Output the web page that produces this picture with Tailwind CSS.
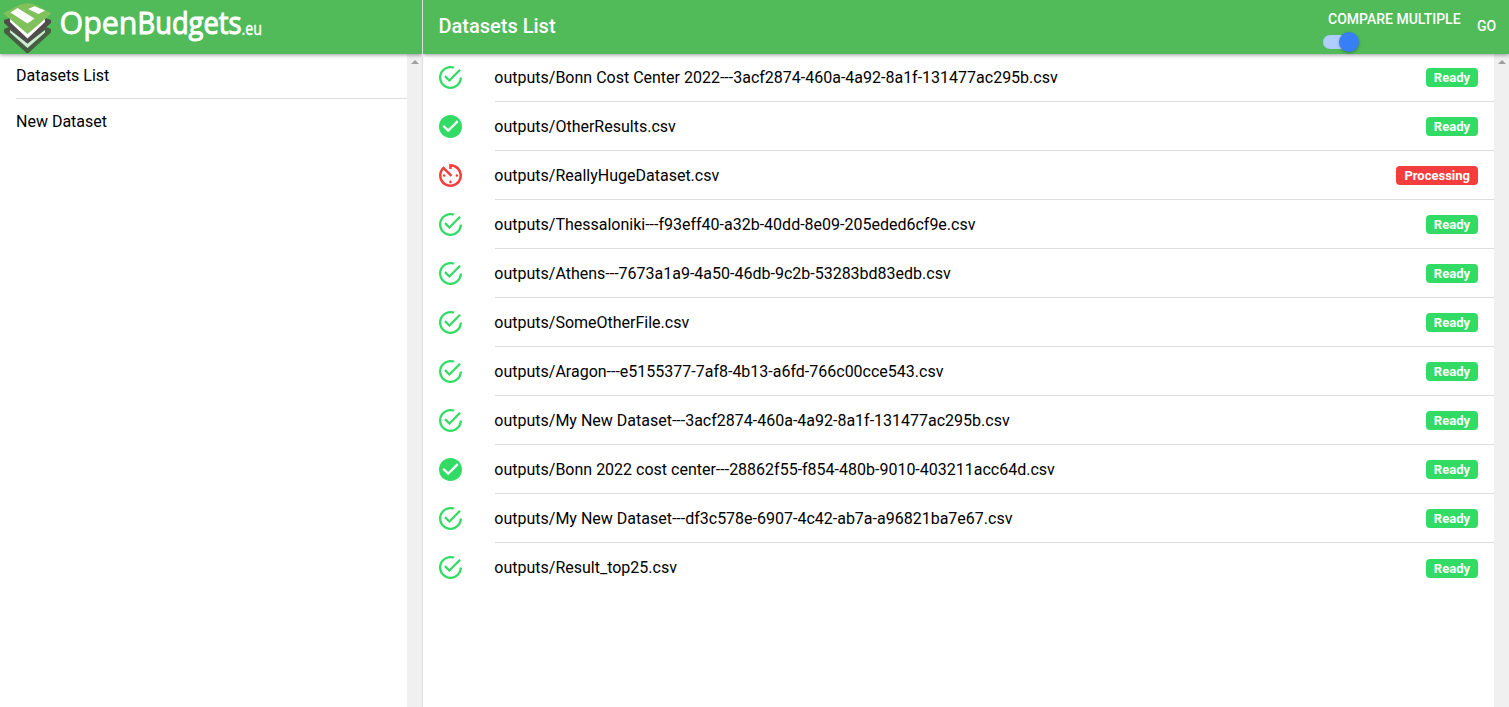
<!DOCTYPE html>
<html lang="en">
<head>
<meta charset="utf-8">
<title>Datasets List</title>
<script src="https://cdn.jsdelivr.net/npm/@tailwindcss/browser@4"></script>
</head>
<body class="flex h-screen overflow-hidden bg-white font-['Roboto',sans-serif] text-base text-black">
<svg class="hidden">
  <symbol id="outline" viewBox="48 48 416 416"><path d="M170.7 216.5 141.6 245.6l93.6 93.6 208-208-29.1-29.1L235.2 280.9zM422.4 256c0 91.5-74.9 166.4-166.4 166.4S89.6 347.5 89.6 256 164.5 89.6 256 89.6c15.600 0 31.200 2.100 45.800 6.200L334 62.400C310.100 53 284.100 48 256 48 141.600 48 48 141.600 48 256s93.600 208 208 208 208-93.600 208-208z"/></symbol>
  <symbol id="filled" viewBox="2 2 20 20"><path d="M12 2C6.480 2 2 6.480 2 12s4.480 10 10 10 10-4.480 10-10S17.520 2 12 2zm-2 15-5-5 1.410-1.410L10 14.170l7.590-7.590L19 8z"/></symbol>
  <symbol id="timer" viewBox="3 3 18 18"><path d="M11 17c0 .55.45 1 1 1s1-.45 1-1-.45-1-1-1-1 .45-1 1zm0-14v4h2V5.080c3.390.49 6 3.390 6 6.920 0 3.870-3.130 7-7 7s-7-3.130-7-7c0-1.680.59-3.220 1.580-4.420L12 13l1.410-1.410-6.800-6.800v.02C4.420 6.450 3 9.050 3 12c0 4.970 4.020 9 9 9 4.970 0 9-4.030 9-9s-4.030-9-9-9h-1zm7 9c0-.55-.45-1-1-1s-1 .45-1 1 .45 1 1 1 1-.45 1-1zM6 12c0 .55.45 1 1 1s1-.45 1-1-.45-1-1-1-1 .45-1 1z"/></symbol>
</svg>
<aside class="flex w-[423px] shrink-0 flex-col border-r border-[#dedede]">
  <header class="z-10 flex h-[54px] shrink-0 bg-[#51ba59] shadow-[0_1px_4px_rgba(0,0,0,0.4)] [clip-path:inset(0_0_-8px_0)]">
    <svg class="h-[54px] w-[280px]" viewBox="0 0 280 54">
      <path d="m4 29 5-2 18.500 14L46 27l5 2v3.500L28.500 53h-2L4 32.500z" fill="#465f42"/>
      <path d="m10 30 17.500 13.500L45 30v2.500L27.500 48 10 32.500z" fill="#cdebd0"/>
      <path d="m4 20 6-2 17.500 15L45 18l6 2v3L27.500 43.500 4 23z" fill="#514c4b"/>
      <path d="m10 18 17.500 14L45 18v4L27.500 38.500 10 22z" fill="#fff"/>
      <path d="M4 13 19 5q9-3.500 17 0l15 8v1L27.500 34 4 14z" fill="#80c15c"/>
      <path d="m10.500 12.500 7-4.500L34.500 18.500l-7 5zM28 9l6.500-2.800 10.500 4.300L38.500 14z" fill="#fff"/>
      <g fill="#fff" stroke="#fff" font-family="Open Sans, sans-serif">
        <text x="59.500" y="34.300" font-size="30.500" stroke-width=".8" textLength="78" lengthAdjust="spacingAndGlyphs">Open</text>
        <text x="137.500" y="34.300" font-size="30.500" stroke-width="1.100" textLength="104" lengthAdjust="spacingAndGlyphs">Budgets</text>
        <text x="241.500" y="34.500" font-size="18" stroke-width=".4" textLength="20.500" lengthAdjust="spacingAndGlyphs">.eu</text>
      </g>
    </svg>
  </header>
  <div class="flex flex-1">
    <nav class="flex-1 pl-4">
      <div class="flex h-[45px] items-center border-b border-[#dedede] pb-px">Datasets List</div>
      <div class="flex h-[45px] items-center">New Dataset</div>
    </nav>
    <div class="flex w-[15px] justify-center bg-[#f0f0f0] pt-1.5"><svg class="h-1 w-2" viewBox="0 0 8 4"><path d="M4 0 8 4H0z" fill="#a0a0a0"/></svg></div>
  </div>
</aside>
<main class="flex min-w-0 flex-1 flex-col">
  <header class="z-10 flex h-[54px] shrink-0 items-center bg-[#51ba59] pl-[15.500px] text-white shadow-[0_1px_4px_rgba(0,0,0,0.4)] [clip-path:inset(0_0_-8px_0)]">
    <h1 class="flex-1 pb-0.5 text-xl font-medium">Datasets List</h1>
    <div class="flex h-full w-[154px] flex-col">
      <span class="mt-[9px] pl-[5px] text-sm leading-5 font-medium whitespace-nowrap">COMPARE MULTIPLE</span>
      <div class="mt-[3px] flex h-5 w-9 items-center">
        <span class="h-3.5 w-[26px] rounded-full bg-[#afcdfd]"></span>
        <span class="-ml-2.5 h-5 w-5 shrink-0 rounded-full bg-[#387ef5] shadow-[0_1px_3px_rgba(0,0,0,0.3)]"></span>
      </div>
    </div>
    <span class="w-8 pb-0.5 text-sm font-medium">GO</span>
  </header>
  <div class="flex flex-1">
    <div id="rows" class="-mt-px min-w-0 flex-1 pl-4"></div>
    <div class="flex w-[15px] justify-center bg-[#f0f0f0] pt-1.5"><svg class="h-1 w-2" viewBox="0 0 8 4"><path d="M4 0 8 4H0z" fill="#a0a0a0"/></svg></div>
  </div>
</main>
<script>
const rows = [
  ['Bonn Cost Center 2022---3acf2874-460a-4a92-8a1f-131477ac295b', 'outline'],
  ['OtherResults', 'filled'],
  ['ReallyHugeDataset', 'timer'],
  ['Thessaloniki---f93eff40-a32b-40dd-8e09-205eded6cf9e', 'outline'],
  ['Athens---7673a1a9-4a50-46db-9c2b-53283bd83edb', 'outline'],
  ['SomeOtherFile', 'outline'],
  ['Aragon---e5155377-7af8-4b13-a6fd-766c00cce543', 'outline'],
  ['My New Dataset---3acf2874-460a-4a92-8a1f-131477ac295b', 'outline'],
  ['Bonn 2022 cost center---28862f55-f854-480b-9010-403211acc64d', 'filled'],
  ['My New Dataset---df3c578e-6907-4c42-ab7a-a96821ba7e67', 'outline'],
  ['Result_top25', 'outline']
];
document.getElementById('rows').innerHTML = rows.map(([name, icon]) => {
  const busy = icon === 'timer';
  return `<div class="group flex h-[49px]">
    <div class="w-14 shrink-0 pt-[13px]"><svg class="h-[23px] w-[23px] ${busy ? 'fill-[#f53d3d]' : 'fill-[#32db64]'}"><use href="#${icon}"/></svg></div>
    <div class="flex flex-1 items-center border-b border-[#dedede] pr-4 group-last:border-0">
      <span class="-ml-[0.7px] flex-1 pt-px group-last:pt-0">outputs/${name}.csv</span>
      <span class="mt-px rounded h-[19px] px-2 text-[13px] leading-[19px] font-bold text-white ${busy ? 'bg-[#f53d3d]' : 'bg-[#32db64]'}">${busy ? 'Processing' : 'Ready'}</span>
    </div>
  </div>`;
}).join('');
</script>
</body>
</html>
